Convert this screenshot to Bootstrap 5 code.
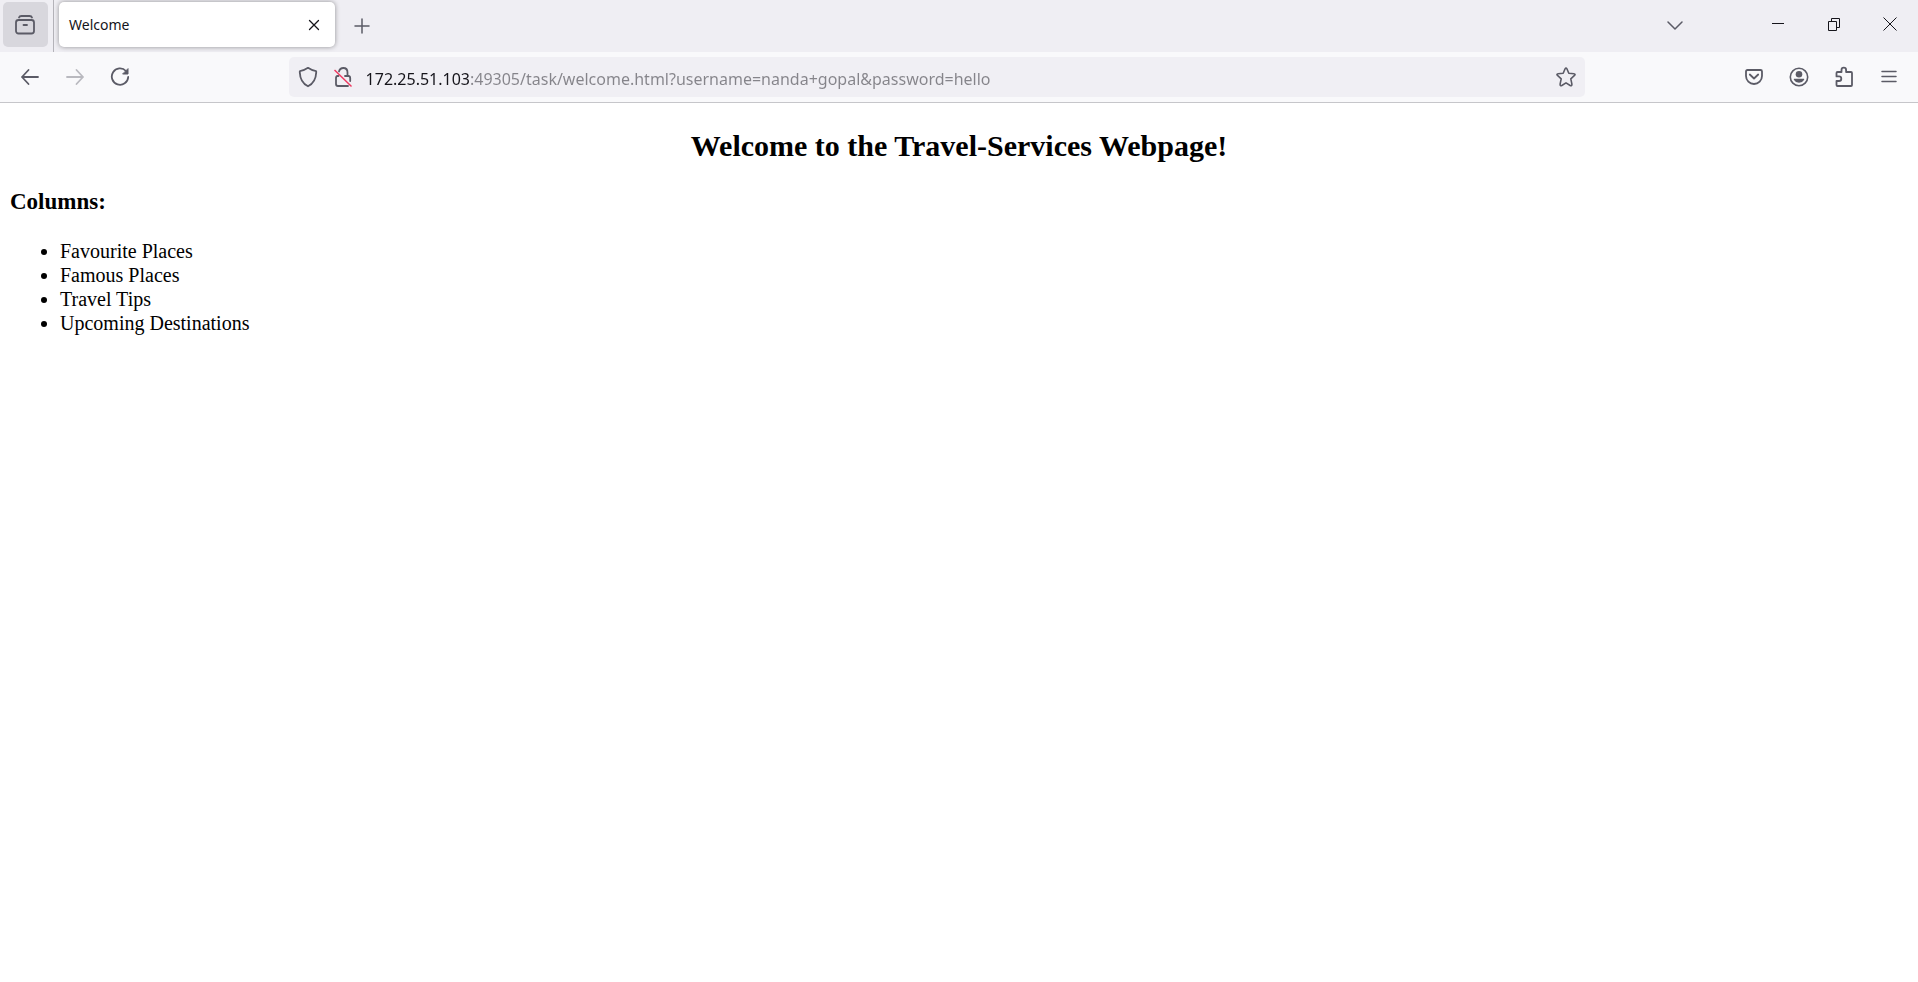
<!DOCTYPE html>
<html lang="en">
<head>
<meta charset="utf-8">
<meta name="viewport" content="width=device-width, initial-scale=1">
<title>Welcome</title>
<link href="https://cdn.jsdelivr.net/npm/bootstrap@5.3.0/dist/css/bootstrap.min.css" rel="stylesheet">
<style>
  body { background: #fff; }
  svg { display: block; fill: none; stroke: #5b5b66; stroke-width: 1.8; stroke-linecap: round; stroke-linejoin: round; flex: none; }
  .chrome-ui { font-family: "Noto Sans", "Open Sans", sans-serif; color: #15141a; }
  .chrome-ui .btn { --bs-btn-border-width: 0px; --bs-btn-padding-x: 0px; --bs-btn-padding-y: 0px; display: flex; align-items: center; justify-content: center; flex: none; }
  .tab-strip { height: 52px; background: #efeef3; }
  .tool { width: 45px; height: 45px; }
  .view-btn { background: #d8d7dd; border-radius: 5px; margin: 2px 5px 5px 3px; }
  .strip-divider { width: 1px; background: #b4b3b9; margin-right: 5px; }
  .page-tab { width: 276px; height: 45px; margin-top: 2px; padding: 0 6px 0 10px; border-radius: 5px; background: #fff; box-shadow: 0 0 5px rgba(0,0,0,.4); font-size: 14px; }
  .tab-close { width: 30px; height: 30px; }
  .tab-close svg { stroke: #15141a; stroke-width: 1.3; }
  .thin svg { stroke-width: 1.5; }
  .strip-tool { margin-top: 3px; }
  .win-btn { width: 56px; height: 48px; }
  .win-btn svg { stroke: #15141a; stroke-width: 1; stroke-linecap: butt; stroke-linejoin: miter; }
  .win-gap { margin-right: 53px; }
  .toolbar { height: 51px; background: #f9f9fb; border-bottom: 1px solid #c6c6ca; padding: 0 6px 0 7px; }
  .spring { flex: 6 1 0; }
  .url-bar { flex: 53 1 0; height: 40px; background: #f0eff4; border-radius: 5px; padding-left: 2px; }
  .url-bar .btn { width: 35px; height: 40px; }
  .url-bar .star { width: 38px; }
  .url-text { border: 0; outline: 0; height: 24px; line-height: 24px; padding: 0; margin: 4px 0 0 5px; font-size: 16px; color: #85848a;
    background: linear-gradient(90deg, #15141a 104px, #85848a 104px); -webkit-background-clip: text; background-clip: text; -webkit-text-fill-color: transparent; }
  .page-body { font-family: "Liberation Serif", serif; color: #000; font-size: 20px; line-height: 24px; padding: 25px 10px; }
  .page-body h1 { font-size: 30px; line-height: 36px; font-weight: 700; margin-bottom: 24px; }
  .page-body h2 { font-size: 23px; line-height: 28px; font-weight: 700; margin-bottom: 23px; }
  .page-body ul { padding-left: 50px; }
</style>
</head>
<body>
<header class="chrome-ui">
  <div class="tab-strip d-flex align-items-start">
    <button class="btn tool view-btn" type="button" aria-label="View recent browsing">
      <svg width="22" height="22" viewBox="0 0 22 22"><path d="M4 3.500Q4.500 2 6.500 2H14.500Q16.500 2 17 3.500"/><rect x="1" y="6" width="18" height="13.500" rx="2.500"/><path d="M8.500 11H12"/></svg>
    </button>
    <div class="strip-divider align-self-stretch"></div>
    <div class="page-tab d-flex align-items-center justify-content-between">
      <span>Welcome</span>
      <button class="btn tab-close" type="button" aria-label="Close tab">
        <svg width="12" height="12" viewBox="0 0 12 12"><path d="M1.500 1.500 10.500 10.500M10.500 1.500 1.500 10.500"/></svg>
      </button>
    </div>
    <button class="btn tool thin strip-tool ms-1" type="button" aria-label="New tab">
      <svg width="16" height="16" viewBox="0 0 16 16"><path d="M8 1V15M1 8H15"/></svg>
    </button>
    <button class="btn tool thin win-gap strip-tool ms-auto" type="button" aria-label="List all tabs">
      <svg width="16" height="10" viewBox="0 0 16 10"><path d="M1 1 8 8 15 1"/></svg>
    </button>
    <button class="btn win-btn" type="button" aria-label="Minimize">
      <svg width="12" height="13" viewBox="0 0 12 13"><path d="M0 5.500H12"/></svg>
    </button>
    <button class="btn win-btn" type="button" aria-label="Restore">
      <svg width="12" height="13" viewBox="0 0 12 13"><path d="M.5 3.500H8.500V12.500H.5ZM3.500 3.500V.5H11.500V9.500H8.500"/></svg>
    </button>
    <button class="btn win-btn" type="button" aria-label="Close">
      <svg width="14" height="14" viewBox="0 0 14 14"><path d="M.5 .5 13.500 13.500M13.500 .5 .5 13.500"/></svg>
    </button>
  </div>
  <nav class="toolbar d-flex align-items-center" aria-label="Navigation">
    <button class="btn tool" type="button" aria-label="Back">
      <svg width="20" height="18" viewBox="0 0 20 18"><path d="M18 9H2M8.500 2 2 9 8.500 16"/></svg>
    </button>
    <button class="btn tool" type="button" aria-label="Forward">
      <svg width="20" height="18" viewBox="0 0 20 18" stroke-opacity=".4"><path d="M2 9H18M11.500 2 18 9 11.500 16"/></svg>
    </button>
    <button class="btn tool" type="button" aria-label="Reload">
      <svg width="20" height="20" viewBox="0 0 20 20"><path d="M16 4A8.200 8.200 0 1 0 18.200 10"/><path d="M18 2V7H13Z" fill="#5b5b66" stroke-width="1"/></svg>
    </button>
    <div class="spring"></div>
    <div class="url-bar d-flex align-items-center overflow-hidden">
      <button class="btn" type="button" aria-label="Tracking protection">
        <svg width="20" height="22" viewBox="0 0 20 22"><path d="M10 1.800Q14 4.500 17.300 4.800Q18.400 4.900 18.200 6.500Q17.800 16.500 10 20.300Q2.200 16.500 1.800 6.500Q1.600 4.900 2.700 4.800Q6 4.500 10 1.800Z"/></svg>
      </button>
      <button class="btn" type="button" aria-label="Connection not secure">
        <svg width="20" height="22" viewBox="0 0 20 22"><path d="M6 5.500Q7 2 10.300 2Q14.500 2 14.500 6.500V10M12 10H15.500Q17 10 17.200 12V15M5.500 10H4.500Q3 10 3 12V18Q3 20 5 20H15"/><path d="M1.500 4 18.500 20.500" stroke="#ee3a61" stroke-width="1.500" stroke-linecap="butt"/></svg>
      </button>
      <input class="url-text flex-grow-1" type="text" aria-label="Address" spellcheck="false" value="172.25.51.103:49305/task/welcome.html?username=nanda+gopal&amp;password=hello">
      <button class="btn star" type="button" aria-label="Bookmark this page">
        <svg width="20" height="20" viewBox="0 0 20 20"><path d="M9.100 1.800Q10 .2 10.900 1.800L12.800 6.300 17.900 6.700Q19.800 7 18.500 8.400L14.800 11.800 15.900 17.200Q15.900 19.200 14.200 18.500L10 15.800 5.800 18.500Q4.100 19.200 4.100 17.200L5.200 11.800 1.500 8.400Q.2 7 2.100 6.700L7.200 6.300Z" stroke-width="1.600"/></svg>
      </button>
    </div>
    <div class="spring"></div>
    <button class="btn tool" type="button" aria-label="Save to Pocket">
      <svg width="20" height="18" viewBox="0 0 20 18"><path d="M3.500 2H16.500Q18 2 18 3.500V8A8 8 0 0 1 2 8V3.500Q2 2 3.500 2Z"/><path d="M5.800 6.500 10 10.500 14.200 6.500"/></svg>
    </button>
    <button class="btn tool" type="button" aria-label="Account">
      <svg width="20" height="20" viewBox="0 0 20 20"><circle cx="10" cy="10" r="8.700" stroke-width="1.600"/><g fill="#5b5b66" stroke="none"><circle cx="10" cy="7.300" r="3.300"/><path d="M5 11.800H15Q15.500 12 15 12.900Q13.400 15.700 10 15.700T5 12.900Q4.500 12 5 11.800Z"/></g></svg>
    </button>
    <button class="btn tool" type="button" aria-label="Extensions">
      <svg width="20" height="22" viewBox="0 0 20 22"><path d="M3.500 6H7.500V4A2.300 2.300 0 0 1 12.100 4V6H17Q18 6 18 7V19Q18 20 17 20H3.500Q2.500 20 2.500 19V15H5A2.300 2.300 0 0 0 5 10.400H2.500V7Q2.500 6 3.500 6Z"/></svg>
    </button>
    <button class="btn tool thin" type="button" aria-label="Open application menu">
      <svg width="16" height="14" viewBox="0 0 16 14"><path d="M1 1.500H15M1 6.500H15M1 11.500H15"/></svg>
    </button>
  </nav>
</header>
<main class="page-body">
  <h1 class="text-center">Welcome to the Travel-Services Webpage!</h1>
  <h2>Columns:</h2>
  <ul class="mb-0">
    <li>Favourite Places</li>
    <li>Famous Places</li>
    <li>Travel Tips</li>
    <li>Upcoming Destinations</li>
  </ul>
</main>
<script src="https://cdn.jsdelivr.net/npm/bootstrap@5.3.0/dist/js/bootstrap.bundle.min.js"></script>
</body>
</html>
